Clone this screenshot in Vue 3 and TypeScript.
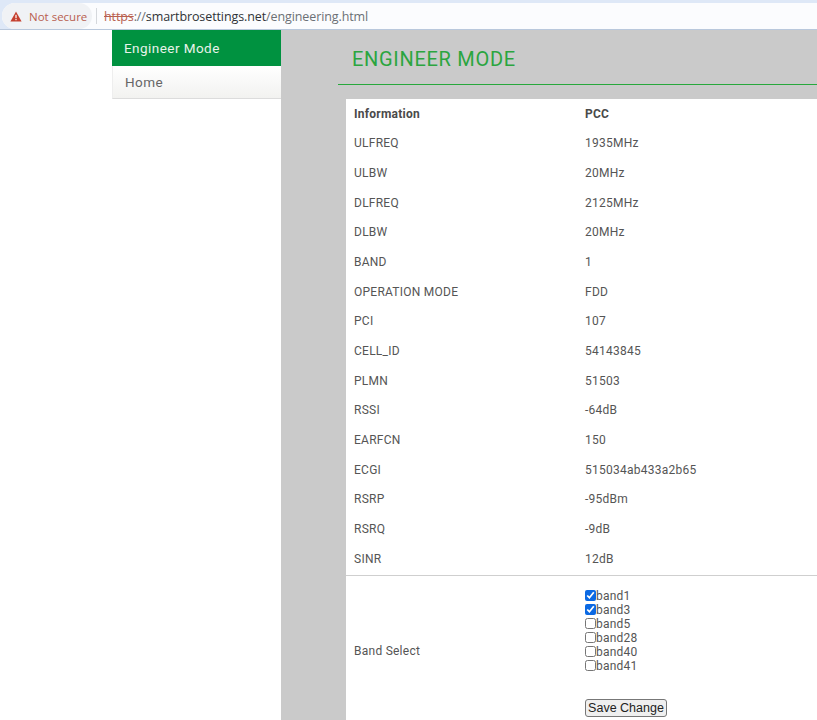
<script setup lang="ts">
const rows: [string, string][] = [
  ['ULFREQ', '1935MHz'],
  ['ULBW', '20MHz'],
  ['DLFREQ', '2125MHz'],
  ['DLBW', '20MHz'],
  ['BAND', '1'],
  ['OPERATION MODE', 'FDD'],
  ['PCI', '107'],
  ['CELL_ID', '54143845'],
  ['PLMN', '51503'],
  ['RSSI', '-64dB'],
  ['EARFCN', '150'],
  ['ECGI', '515034ab433a2b65'],
  ['RSRP', '-95dBm'],
  ['RSRQ', '-9dB'],
  ['SINR', '12dB'],
]

const bands = [
  { name: 'band1', checked: true },
  { name: 'band3', checked: true },
  { name: 'band5', checked: false },
  { name: 'band28', checked: false },
  { name: 'band40', checked: false },
  { name: 'band41', checked: false },
]
</script>

<template>
  <div class="page">
    <div class="browser-bar">
      <div class="omnibox">
        <div class="security">
          <svg class="warn" viewBox="0 0 12 11" width="12" height="11" aria-hidden="true">
            <path d="M6 0.5 L11.6 10.5 H0.4 Z" fill="#c5402f" />
            <rect x="5.4" y="3.8" width="1.2" height="3.4" fill="#fff" />
            <rect x="5.4" y="8" width="1.2" height="1.2" fill="#fff" />
          </svg>
          <span>Not secure</span>
        </div>
        <span class="sep"></span>
        <span class="url"><span class="https">https</span><span class="scheme-rest">://</span><span class="host">smartbrosettings.net</span><span class="path">/engineering.html</span></span>
      </div>
    </div>

    <div class="main">
      <aside class="sidebar">
        <div class="side-title">Engineer Mode</div>
        <div class="side-item">Home</div>
      </aside>

      <section class="content">
        <h1 class="heading">ENGINEER MODE</h1>
        <div class="panel">
          <div class="row head">
            <div class="col-a">Information</div>
            <div class="col-b">PCC</div>
          </div>
          <div v-for="r in rows" :key="r[0]" class="row">
            <div class="col-a">{{ r[0] }}</div>
            <div class="col-b">{{ r[1] }}</div>
          </div>
          <div class="band-row">
            <div class="col-a band-label">Band Select</div>
            <div class="col-b">
              <label v-for="b in bands" :key="b.name" class="band">
                <input type="checkbox" :checked="b.checked" />{{ b.name }}
              </label>
              <button class="save" type="button">Save Change</button>
            </div>
          </div>
        </div>
      </section>
    </div>
  </div>
</template>

<style>
html,
body {
  margin: 0;
  background: #fff;
}
</style>

<style scoped>
.page {
  width: 817px;
  height: 720px;
  overflow: hidden;
  font-family: Roboto, "Liberation Sans", sans-serif;
  color: #555;
}

.browser-bar {
  height: 30px;
  box-sizing: border-box;
  padding-top: 3px;
  background: #dee8f7;
  border-bottom: 1px solid #b9c8dc;
}

.omnibox {
  height: 26px;
  margin-left: 2px;
  border-radius: 13px 0 0 13px;
  background: #fbfcfe;
  display: flex;
  align-items: center;
  font-family: "Open Sans", Roboto, sans-serif;
  font-size: 12.5px;
}

.security {
  height: 100%;
  width: 90px;
  box-sizing: border-box;
  padding-left: 8px;
  border-radius: 13px;
  background: #f0f2f5;
  display: flex;
  align-items: center;
  gap: 7px;
  color: #b8604f;
  font-size: 11.5px;
}

.warn {
  flex: none;
}

.sep {
  width: 1px;
  height: 16px;
  margin: 0 7px 0 4px;
  background: #d5d8dc;
}

.url {
  letter-spacing: -0.1px;
}

.https {
  color: #b8604f;
  text-decoration: line-through;
}

.scheme-rest,
.path {
  color: #6b7075;
}

.host {
  color: #2f3337;
}

.main {
  display: flex;
  height: 690px;
  padding-left: 112px;
}

.sidebar {
  width: 169px;
  flex: none;
  font-size: 13.5px;
  letter-spacing: 0.45px;
}

.side-title {
  height: 36px;
  box-sizing: border-box;
  padding: 10px 0 0 12px;
  background: #009240;
  color: #e8f3ea;
}

.side-item {
  height: 33px;
  box-sizing: border-box;
  padding: 8px 0 0 12px;
  background: linear-gradient(#ffffff, #f2f2f0);
  border-bottom: 1px solid #dcdcdc;
  border-left: 1px solid #eeeeee;
  color: #666;
}

.content {
  flex: 1;
  background: #cacaca;
  padding: 0 0 0 57px;
  min-width: 0;
}

.heading {
  margin: 0;
  height: 55px;
  box-sizing: border-box;
  padding: 17px 0 0 14px;
  border-bottom: 1px solid #27a83c;
  font-size: 20px;
  font-weight: 400;
  line-height: 24px;
  letter-spacing: 0.7px;
  color: #2ba53f;
}

.panel {
  margin: 14px 0 0 8px;
  background: #fff;
  height: 640px;
  font-size: 12px;
  letter-spacing: 0.25px;
}

.row {
  display: flex;
  height: 29.66px;
  align-items: center;
}

.head {
  font-weight: 700;
  color: #4a4a4a;
}

.col-a {
  width: 231px;
  flex: none;
  padding-left: 8px;
  box-sizing: content-box;
}

.col-b {
  flex: 1;
}

.band-row {
  display: flex;
  align-items: center;
  border-top: 1px solid #cfcfcf;
  margin-top: 1px;
  height: 146px;
  box-sizing: border-box;
  padding-top: 9px;
}

.band-label {
  margin-bottom: 3px;
}

.band {
  display: block;
  height: 14px;
  line-height: 14px;
  white-space: nowrap;
  letter-spacing: 0.2px;
}

.band input {
  width: 11px;
  height: 11px;
  margin: 0;
  vertical-align: -1px;
  accent-color: #0b69e3;
}

.save {
  display: block;
  margin-top: 26px;
  width: 82px;
  height: 18px;
  padding: 0;
  box-sizing: border-box;
  border: 1px solid #777;
  border-radius: 3px;
  background: #efefef;
  font-family: "Liberation Sans", Arial, sans-serif;
  font-size: 12.5px;
  color: #222;
}
</style>
